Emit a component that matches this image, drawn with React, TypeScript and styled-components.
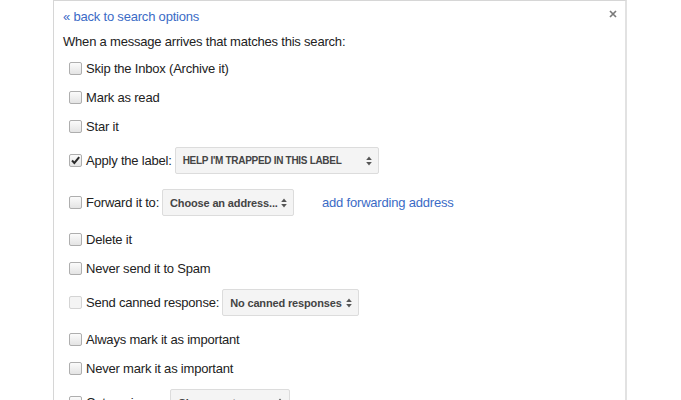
import React from "react";
import styled, { createGlobalStyle } from "styled-components";

const Global = createGlobalStyle`
  html, body { margin: 0; padding: 0; background: #ffffff; overflow: hidden; }
  body { font-family: "Liberation Sans", Arial, sans-serif; color: #222; }
`;

const Page = styled.div`
  height: 400px;
  padding-left: 53px;
  box-sizing: border-box;
`;

const Panel = styled.div`
  width: 574px;
  min-height: 430px;
  box-sizing: border-box;
  border-top: 1px solid #d6d6d6;
  border-left: 1px solid #d6d6d6;
  border-right: 2px solid #e2e2e2;
  padding: 6px 8px 0 9px;
  display: flex;
  flex-direction: column;
`;

const TopBar = styled.div`
  display: flex;
  justify-content: space-between;
  height: 20px;
`;

const Link = styled.a`
  font-size: 13px;
  letter-spacing: -0.2px;
  line-height: 20px;
  color: #3b6bc6;
  text-decoration: none;
  cursor: pointer;
`;

const Close = styled.button`
  all: unset;
  align-self: flex-start;
  margin-top: 3px;
  width: 8px;
  height: 8px;
  display: flex;
  cursor: pointer;
`;

const Intro = styled.div`
  margin-top: 5px;
  font-size: 13px;
  letter-spacing: -0.2px;
  line-height: 20px;
`;

const List = styled.div`
  padding: 2px 0 0 6px;
  display: flex;
  flex-direction: column;
`;

const Row = styled.div<{ $select?: boolean }>`
  display: flex;
  align-items: center;
  height: 29px;
  padding: ${(p) => (p.$select ? "5px 0 8px" : "0")};
  font-size: 13px;
  letter-spacing: -0.2px;
  white-space: nowrap;
`;

const Box = styled.span<{ $checked?: boolean; $disabled?: boolean }>`
  width: 13px;
  height: 13px;
  box-sizing: border-box;
  margin-right: 4px;
  border-radius: 2px;
  border: 1px solid ${(p) => (p.$disabled ? "#d4d4d4" : "#aeaeae")};
  background: ${(p) =>
    p.$disabled ? "#f4f4f4" : "linear-gradient(#fbfbfb, #e4e4e4)"};
  display: flex;
  align-items: center;
  justify-content: center;
  flex: none;
`;

const Label = styled.span`
  color: #222;
`;

const Select = styled.span<{ $w: number; $caps?: boolean }>`
  display: inline-flex;
  align-items: center;
  justify-content: space-between;
  box-sizing: border-box;
  width: ${(p) => p.$w}px;
  height: 27px;
  margin-left: 3px;
  padding: 0 6px 0 7px;
  border: 1px solid #dcdcdc;
  border-radius: 2px;
  background: #f4f4f4;
  color: #444;
  font-weight: bold;
  font-size: ${(p) => (p.$caps ? "10px" : "11px")};
  letter-spacing: ${(p) => (p.$caps ? "-0.3px" : "-0.15px")};
`;

const Action = styled.a`
  margin-left: 28px;
  color: #3b6bc6;
  text-decoration: none;
  cursor: pointer;
`;

const Arrows = () => (
  <svg width="6" height="10" viewBox="0 0 6 10">
    <path d="M3 0.5 L5.8 4 L0.2 4 Z" fill="#555" />
    <path d="M3 9.5 L5.8 6 L0.2 6 Z" fill="#555" />
  </svg>
);

const Check = ({ checked, disabled }: { checked?: boolean; disabled?: boolean }) => (
  <Box $checked={checked} $disabled={disabled}>
    {checked && (
      <svg width="11" height="11" viewBox="0 0 11 11">
        <path d="M2 5.5 L4.4 8 L9.2 2.2" stroke="#2a2a2a" strokeWidth="2" fill="none" />
      </svg>
    )}
  </Box>
);

const Dropdown = ({ w, text, caps }: { w: number; text: string; caps?: boolean }) => (
  <Select $w={w} $caps={caps}>
    <span>{text}</span>
    <Arrows />
  </Select>
);

export default function App() {
  return (
    <>
      <Global />
      <Page>
        <Panel>
          <TopBar>
            <Link>« back to search options</Link>
            <Close aria-label="close">
              <svg width="8" height="8" viewBox="0 0 8 8">
                <path d="M1 1 L7 7 M7 1 L1 7" stroke="#7a7a7a" strokeWidth="1.7" />
              </svg>
            </Close>
          </TopBar>
          <Intro>When a message arrives that matches this search:</Intro>
          <List>
            <Row>
              <Check />
              <Label>Skip the Inbox (Archive it)</Label>
            </Row>
            <Row>
              <Check />
              <Label>Mark as read</Label>
            </Row>
            <Row>
              <Check />
              <Label>Star it</Label>
            </Row>
            <Row $select>
              <Check checked />
              <Label>Apply the label:</Label>
              <Dropdown w={204} caps text="HELP I'M TRAPPED IN THIS LABEL" />
            </Row>
            <Row $select>
              <Check />
              <Label>Forward it to:</Label>
              <Dropdown w={132} text="Choose an address..." />
              <Action>add forwarding address</Action>
            </Row>
            <Row>
              <Check />
              <Label>Delete it</Label>
            </Row>
            <Row>
              <Check />
              <Label>Never send it to Spam</Label>
            </Row>
            <Row $select>
              <Check disabled />
              <Label>Send canned response:</Label>
              <Dropdown w={137} text="No canned responses" />
            </Row>
            <Row>
              <Check />
              <Label>Always mark it as important</Label>
            </Row>
            <Row>
              <Check />
              <Label>Never mark it as important</Label>
            </Row>
            <Row $select>
              <Check />
              <Label>Categorize as:</Label>
              <Dropdown w={120} text="Choose category..." />
            </Row>
          </List>
        </Panel>
      </Page>
    </>
  );
}
